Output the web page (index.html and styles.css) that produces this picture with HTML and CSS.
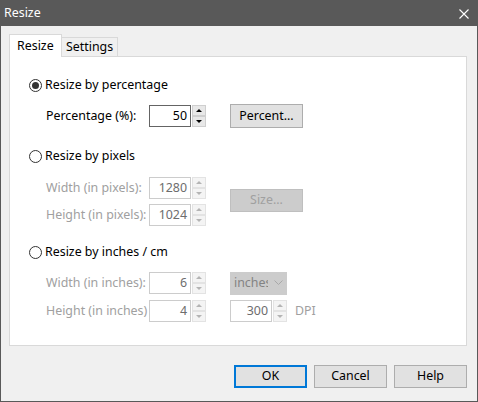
FILE: index.html
```html
<!DOCTYPE html>
<html>
<head>
<meta charset="utf-8">
<link rel="stylesheet" href="styles.css">
</head>
<body>
<div class="window">
  <div class="titlebar">
    <span class="title">Resize</span>
    <svg class="close" width="10" height="10" viewBox="0 0 10 10"><path d="M0.5 0.5 L9.5 9.5 M9.5 0.5 L0.5 9.5" stroke="#fff" stroke-width="1.1" fill="none"/></svg>
  </div>
  <div class="content">
    <div class="tabs">
      <div class="tab active">Resize</div>
      <div class="tab">Settings</div>
    </div>
    <div class="panel">
      <div class="radio-row first">
        <span class="radio checked"><span class="dot"></span></span>
        <span class="radio-text">Resize by percentage</span>
      </div>
      <div class="fields f1">
        <span class="lbl">Percentage (%):</span>
        <div class="spinbox">
          <div class="field">50</div>
          <div class="spin"><div class="sb up"></div><div class="sb down"></div></div>
        </div>
        <div class="btn">Percent...</div>
      </div>

      <div class="radio-row second">
        <span class="radio"></span>
        <span class="radio-text">Resize by pixels</span>
      </div>
      <div class="fields f2 disabled">
        <span class="lbl">Width (in pixels):</span>
        <div class="spinbox">
          <div class="field">1280</div>
          <div class="spin"><div class="sb up"></div><div class="sb down"></div></div>
        </div>
        <div class="btn btn-disabled span2">Size...</div>
        <span class="lbl">Height (in pixels):</span>
        <div class="spinbox">
          <div class="field">1024</div>
          <div class="spin"><div class="sb up"></div><div class="sb down"></div></div>
        </div>
      </div>

      <div class="radio-row third">
        <span class="radio"></span>
        <span class="radio-text">Resize by inches / cm</span>
      </div>
      <div class="fields f3 disabled">
        <span class="lbl">Width (in inches):</span>
        <div class="spinbox">
          <div class="field">6</div>
          <div class="spin"><div class="sb up"></div><div class="sb down"></div></div>
        </div>
        <div class="combo"><span class="combo-text">inches</span><svg class="chev" width="9" height="6" viewBox="0 0 9 6"><path d="M0.5 0.5 L4.5 4.5 L8.5 0.5" stroke="#a8a8a8" fill="none" stroke-width="1"/></svg></div>
        <span class="lbl">Height (in inches)</span>
        <div class="spinbox">
          <div class="field">4</div>
          <div class="spin"><div class="sb up"></div><div class="sb down"></div></div>
        </div>
        <div class="dpi">
          <div class="spinbox">
            <div class="field">300</div>
            <div class="spin"><div class="sb up"></div><div class="sb down"></div></div>
          </div>
          <span class="dpi-text">DPI</span>
        </div>
      </div>
    </div>
    <div class="footer">
      <div class="btn default">OK</div>
      <div class="btn">Cancel</div>
      <div class="btn">Help</div>
    </div>
  </div>
</div>
</body>
</html>
```
FILE: styles.css
```css
html, body {
  margin: 0;
  padding: 0;
  background: #f0f0f0;
}
body {
  font-family: "Noto Sans", "Liberation Sans", sans-serif;
  font-size: 12.4px;
  color: #000;
}
.window {
  width: 478px;
  height: 402px;
  box-sizing: border-box;
  border: 1px solid #595959;
  border-top: none;
  background: #f0f0f0;
  display: flex;
  flex-direction: column;
}
.titlebar {
  height: 26px;
  background: #595959;
  display: flex;
  align-items: center;
  justify-content: space-between;
  padding: 0 9px 0 3px;
  margin: 0 -1px;
  flex: none;
}
.title {
  color: #fff;
  line-height: 16px;
  padding-left: 1px;
}
.close {
  display: block;
  margin-top: 1px;
}
.content {
  flex: 1;
  display: flex;
  flex-direction: column;
  padding: 8px 10px 0 8px;
}
.tabs {
  display: flex;
  align-items: flex-end;
}
.tab {
  box-sizing: border-box;
  border: 1px solid #d9d9d9;
  border-bottom: none;
  line-height: 16px;
  white-space: nowrap;
}
.tab.active {
  width: 53px;
  height: 23px;
  background: #fff;
  margin-bottom: -1px;
  padding: 3px 0 0 7px;
  position: relative;
  z-index: 1;
}
.tab:not(.active) {
  width: 57px;
  height: 19px;
  margin-left: -1px;
  background: #f0f0f0;
  padding: 1px 0 0 4px;
}
.panel {
  box-sizing: border-box;
  width: 458px;
  height: 290px;
  background: #fff;
  border: 1px solid #d9d9d9;
  padding: 20px 0 0 19px;
}
.radio-row {
  display: flex;
  align-items: center;
  height: 16px;
  line-height: 16px;
}
.radio-row.second { margin-top: 21px; }
.radio-row.third { margin-top: 18px; }
.radio {
  box-sizing: border-box;
  width: 13px;
  height: 13px;
  border: 1px solid #333;
  border-radius: 50%;
  background: #fff;
  display: flex;
  align-items: center;
  justify-content: center;
  margin-right: 3px;
}
.dot {
  width: 7px;
  height: 7px;
  border-radius: 50%;
  background: #333;
}
.fields {
  display: grid;
  grid-template-columns: 103px 81px auto;
  grid-auto-rows: 22px;
  align-items: center;
  padding-left: 17px;
  margin-top: 12px;
}
.fields.f2 { margin-top: 13px; row-gap: 5px; }
.fields.f3 { margin-top: 12px; row-gap: 6px; }
.lbl {
  line-height: 16px;
  white-space: nowrap;
}
.disabled .lbl { color: #a0a0a0; }
.spinbox {
  display: flex;
  height: 22px;
}
.field {
  box-sizing: border-box;
  width: 42px;
  height: 22px;
  border: 1px solid #646464;
  background: #fff;
  text-align: right;
  padding-right: 3px;
  line-height: 19px;
}
.disabled .field {
  border-color: #cccccc;
  color: #6d6d6d;
}
.spin {
  width: 14px;
  margin-left: 1px;
  display: flex;
  flex-direction: column;
}
.sb {
  box-sizing: border-box;
  height: 11px;
  border: 1px solid #cfcfcf;
  background: #e8e8e8;
  display: flex;
  align-items: center;
  justify-content: center;
}
.sb::after {
  content: "";
  width: 0;
  height: 0;
  border-left: 3px solid transparent;
  border-right: 3px solid transparent;
}
.sb.up::after { border-bottom: 3px solid #000; }
.sb.down::after { border-top: 3px solid #000; }
.disabled .sb {
  border-color: #e3e3e3;
  background: #f4f4f4;
}
.disabled .sb.up::after { border-bottom-color: #b4b4b4; }
.disabled .sb.down::after { border-top-color: #b4b4b4; }
.btn {
  box-sizing: border-box;
  width: 73px;
  height: 23px;
  border: 1px solid #adadad;
  background: #e1e1e1;
  text-align: center;
  line-height: 20px;
}
.f1 .btn { height: 24px; line-height: 21px; }
.btn-disabled {
  background: #cccccc;
  border-color: #bfbfbf;
  color: #a0a0a0;
}
.span2 {
  grid-row: 1 / span 2;
  grid-column: 3;
  margin-top: -2px;
}
.combo {
  box-sizing: border-box;
  width: 57px;
  height: 23px;
  background: #cccccc;
  border: 1px solid #cccccc;
  display: flex;
  align-items: center;
  padding-left: 3px;
  color: #838383;
}
.combo-text {
  width: 34px;
  overflow: hidden;
  white-space: nowrap;
  line-height: 16px;
}
.chev {
  margin-left: 6px;
}
.dpi {
  display: flex;
  align-items: center;
}
.dpi-text {
  margin-left: 8px;
  color: #a0a0a0;
  line-height: 16px;
}
.footer {
  display: flex;
  justify-content: flex-end;
  gap: 7px;
  margin-top: 19px;
}
.footer .btn.default {
  border: 2px solid #0078d7;
  line-height: 18px;
}
```
